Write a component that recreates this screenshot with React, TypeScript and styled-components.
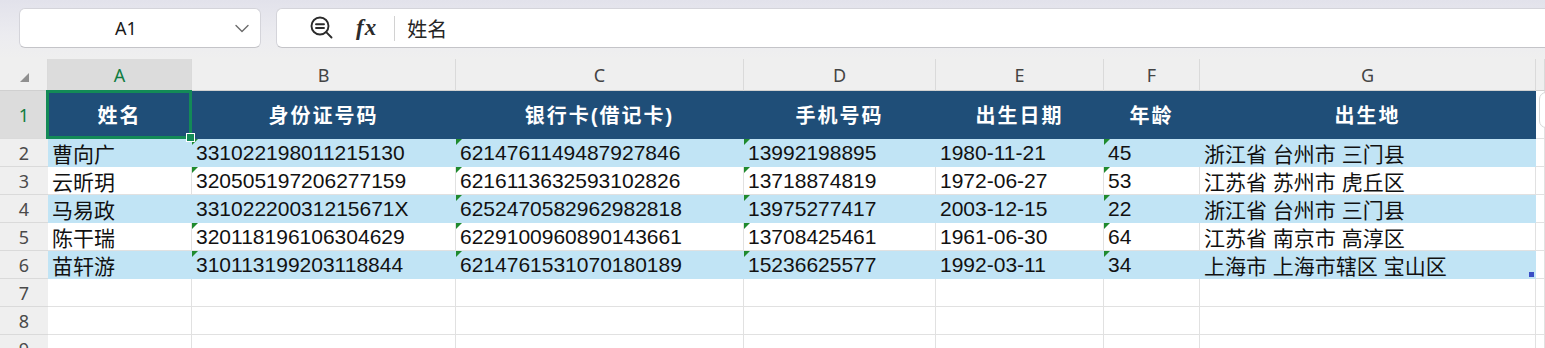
import React from "react";
import styled, { createGlobalStyle } from "styled-components";

const GlobalStyle = createGlobalStyle`
  html, body {
    margin: 0;
    padding: 0;
    background: #ffffff;
    overflow: hidden;
  }
  * {
    box-sizing: border-box;
  }
`;

const UI_FONT = `"Noto Sans", "Open Sans", "Noto Sans CJK SC", sans-serif`;
const CELL_FONT = `"Liberation Sans", "Noto Sans CJK SC", sans-serif`;

const HEADER_BLUE = "#1f4e78";
const BAND_BLUE = "#c1e4f5";
const GRID = "#e1e1e1";
const SELECT_GREEN = "#138a57";

const Page = styled.div`
  width: 1545px;
  height: 348px;
  overflow: hidden;
  background: #efefef;
`;

const TopBar = styled.div`
  display: flex;
  gap: 15px;
  height: 59px;
  padding: 8px 0 11px 19px;
  background: linear-gradient(#e2e2eb 0%, #ececf0 60%, #efefef 100%);
`;

const NameBox = styled.div`
  display: flex;
  align-items: center;
  width: 242px;
  height: 40px;
  background: #ffffff;
  border: 1px solid #d4d4da;
  border-bottom-color: #c4c4c8;
  border-radius: 6px;
`;

const NameText = styled.div`
  flex: 1;
  text-align: center;
  font-family: ${UI_FONT};
  font-size: 18px;
  color: #1a1a1a;
  padding-left: 8px;
`;

const Chevron = styled.div`
  display: flex;
  align-items: center;
  justify-content: center;
  width: 36px;
  color: #6b6b6b;
`;

const FormulaBar = styled.div`
  flex: 1;
  display: flex;
  align-items: center;
  height: 40px;
  padding-left: 32px;
  background: #ffffff;
  border: 1px solid #d4d4da;
  border-bottom-color: #c4c4c8;
  border-right: none;
  border-radius: 6px 0 0 6px;
`;

const IconButton = styled.div`
  display: flex;
  align-items: center;
  justify-content: center;
  width: 26px;
  height: 26px;
  color: #2b2b2b;
`;

const FxLabel = styled.div`
  margin-left: 21px;
  font-family: "Liberation Serif", serif;
  font-style: italic;
  font-weight: 700;
  font-size: 23px;
  color: #2b2b2b;
  letter-spacing: 1px;
`;

const Divider = styled.div`
  width: 1px;
  height: 25px;
  margin: 0 12px 0 17px;
  background: #d2d2d2;
`;

const FormulaText = styled.div`
  font-family: "Noto Sans CJK SC", sans-serif;
  font-size: 20px;
  color: #262626;
`;

const Sheet = styled.div`
  display: grid;
  grid-template-columns: 48px 144px 264px 288px 192px 168px 96px 336px 1fr;
  grid-template-rows: 32px 48px repeat(8, 28px);
  background: #ffffff;
`;

const Corner = styled.div`
  position: relative;
  background: #efefef;
  border-bottom: 1px solid #d0d0d0;
  border-right: 1px solid #dadada;

  &::after {
    content: "";
    position: absolute;
    left: 20px;
    top: 14px;
    width: 0;
    height: 0;
    border-left: 9px solid transparent;
    border-bottom: 9px solid #8f8f8f;
  }
`;

const ColHeader = styled.div<{ $active?: boolean }>`
  display: flex;
  align-items: center;
  justify-content: center;
  font-family: ${UI_FONT};
  font-size: 18px;
  color: ${(p) => (p.$active ? "#107c41" : "#444444")};
  background: ${(p) => (p.$active ? "#dcdcdc" : "#efefef")};
  border-right: 1px solid #dadada;
  border-bottom: 1px solid #d0d0d0;
`;

const RowHeader = styled.div<{ $active?: boolean }>`
  display: flex;
  align-items: center;
  justify-content: center;
  font-family: ${UI_FONT};
  font-size: 18px;
  color: ${(p) => (p.$active ? "#107c41" : "#4a4a4a")};
  background: ${(p) => (p.$active ? "#dcdcdc" : "#efefef")};
  border-bottom: 1px solid #dadada;
`;

type Fill = "header" | "band" | "none";

const fillColor = (f: Fill) =>
  f === "header" ? HEADER_BLUE : f === "band" ? BAND_BLUE : "#ffffff";

const Cell = styled.div<{ $fill: Fill }>`
  position: relative;
  display: flex;
  align-items: center;
  justify-content: ${(p) => (p.$fill === "header" ? "center" : "flex-start")};
  padding-left: ${(p) => (p.$fill === "header" ? "0" : "4px")};
  white-space: nowrap;
  font-family: ${CELL_FONT};
  font-size: ${(p) => (p.$fill === "header" ? "20px" : "21px")};
  font-weight: ${(p) => (p.$fill === "header" ? 700 : 400)};
  letter-spacing: ${(p) => (p.$fill === "header" ? "2px" : "0")};
  color: ${(p) => (p.$fill === "header" ? "#ffffff" : "#111111")};
  background: ${(p) => fillColor(p.$fill)};
  border-right: 1px solid ${(p) => (p.$fill === "none" ? GRID : fillColor(p.$fill))};
  border-bottom: 1px solid ${(p) => (p.$fill === "none" ? GRID : fillColor(p.$fill))};
`;

const TextFlag = styled.span`
  position: absolute;
  left: 0;
  top: 0;
  width: 0;
  height: 0;
  border-top: 6px solid #1f8a2e;
  border-right: 6px solid transparent;
`;

const Selection = styled.div`
  position: absolute;
  left: -2px;
  top: -1px;
  right: -1px;
  bottom: -1px;
  border: 3px solid ${SELECT_GREEN};
  pointer-events: none;
  z-index: 2;
`;

const FillHandle = styled.span`
  position: absolute;
  right: -6px;
  bottom: -6px;
  width: 9px;
  height: 9px;
  background: ${SELECT_GREEN};
  border: 1.5px solid #ffffff;
`;

const TableHandle = styled.span`
  position: absolute;
  right: 1px;
  bottom: 1px;
  width: 5px;
  height: 5px;
  background: #3a4fc6;
`;

const SidePeek = styled.div`
  position: absolute;
  left: 3px;
  top: 1px;
  width: 24px;
  height: 36px;
  border: 1px solid #d6d6d6;
  border-radius: 7px;
  background: #ffffff;
`;

const columns = ["A", "B", "C", "D", "E", "F", "G", ""];

const headers = ["姓名", "身份证号码", "银行卡(借记卡)", "手机号码", "出生日期", "年龄", "出生地"];

const rows: string[][] = [
  ["曹向广", "331022198011215130", "6214761149487927846", "13992198895", "1980-11-21", "45", "浙江省 台州市 三门县"],
  ["云昕玥", "320505197206277159", "6216113632593102826", "13718874819", "1972-06-27", "53", "江苏省 苏州市 虎丘区"],
  ["马易政", "33102220031215671X", "6252470582962982818", "13975277417", "2003-12-15", "22", "浙江省 台州市 三门县"],
  ["陈干瑞", "320118196106304629", "6229100960890143661", "13708425461", "1961-06-30", "64", "江苏省 南京市 高淳区"],
  ["苗轩游", "310113199203118844", "6214761531070180189", "15236625577", "1992-03-11", "34", "上海市 上海市辖区 宝山区"],
];

// numbers stored as text get the little green corner
const hasFlag = (col: number, value: string) =>
  (col === 1 && /^\d+$/.test(value)) || col === 2 || col === 3 || col === 5;

const ZoomOutIcon = () => (
  <svg width="26" height="26" viewBox="0 0 26 26" fill="none" stroke="currentColor" strokeWidth="1.9" strokeLinecap="round">
    <circle cx="11" cy="11" r="8.5" />
    <line x1="7" y1="9.3" x2="15" y2="9.3" />
    <line x1="7" y1="13" x2="15" y2="13" />
    <line x1="17.2" y1="17.2" x2="22.5" y2="22.5" />
  </svg>
);

const ChevronIcon = () => (
  <svg width="14" height="9" viewBox="0 0 14 9" fill="none" stroke="currentColor" strokeWidth="1.4" strokeLinecap="round" strokeLinejoin="round">
    <polyline points="1,1.5 7,7.5 13,1.5" />
  </svg>
);

export default function App() {
  return (
    <Page>
      <GlobalStyle />
      <TopBar>
        <NameBox>
          <NameText>A1</NameText>
          <Chevron>
            <ChevronIcon />
          </Chevron>
        </NameBox>
        <FormulaBar>
          <IconButton>
            <ZoomOutIcon />
          </IconButton>
          <FxLabel>fx</FxLabel>
          <Divider />
          <FormulaText>姓名</FormulaText>
        </FormulaBar>
      </TopBar>

      <Sheet>
        <Corner />
        {columns.map((c, i) => (
          <ColHeader key={`col-${i}`} $active={c === "A"}>
            {c}
          </ColHeader>
        ))}

        <RowHeader $active>1</RowHeader>
        {headers.map((h, i) => (
          <Cell key={`h-${i}`} $fill="header">
            {h}
            {i === 0 && (
              <Selection>
                <FillHandle />
              </Selection>
            )}
          </Cell>
        ))}
        <Cell $fill="none">
          <SidePeek />
        </Cell>

        {rows.map((row, r) => (
          <React.Fragment key={`r-${r}`}>
            <RowHeader>{r + 2}</RowHeader>
            {row.map((v, c) => (
              <Cell key={`c-${r}-${c}`} $fill={r % 2 === 0 ? "band" : "none"}>
                {hasFlag(c, v) && <TextFlag />}
                {v}
                {r === rows.length - 1 && c === row.length - 1 && <TableHandle />}
              </Cell>
            ))}
            <Cell $fill="none" />
          </React.Fragment>
        ))}

        {[7, 8, 9].map((n) => (
          <React.Fragment key={`e-${n}`}>
            <RowHeader>{n}</RowHeader>
            {columns.map((_, c) => (
              <Cell key={`e-${n}-${c}`} $fill="none" />
            ))}
          </React.Fragment>
        ))}
      </Sheet>
    </Page>
  );
}
